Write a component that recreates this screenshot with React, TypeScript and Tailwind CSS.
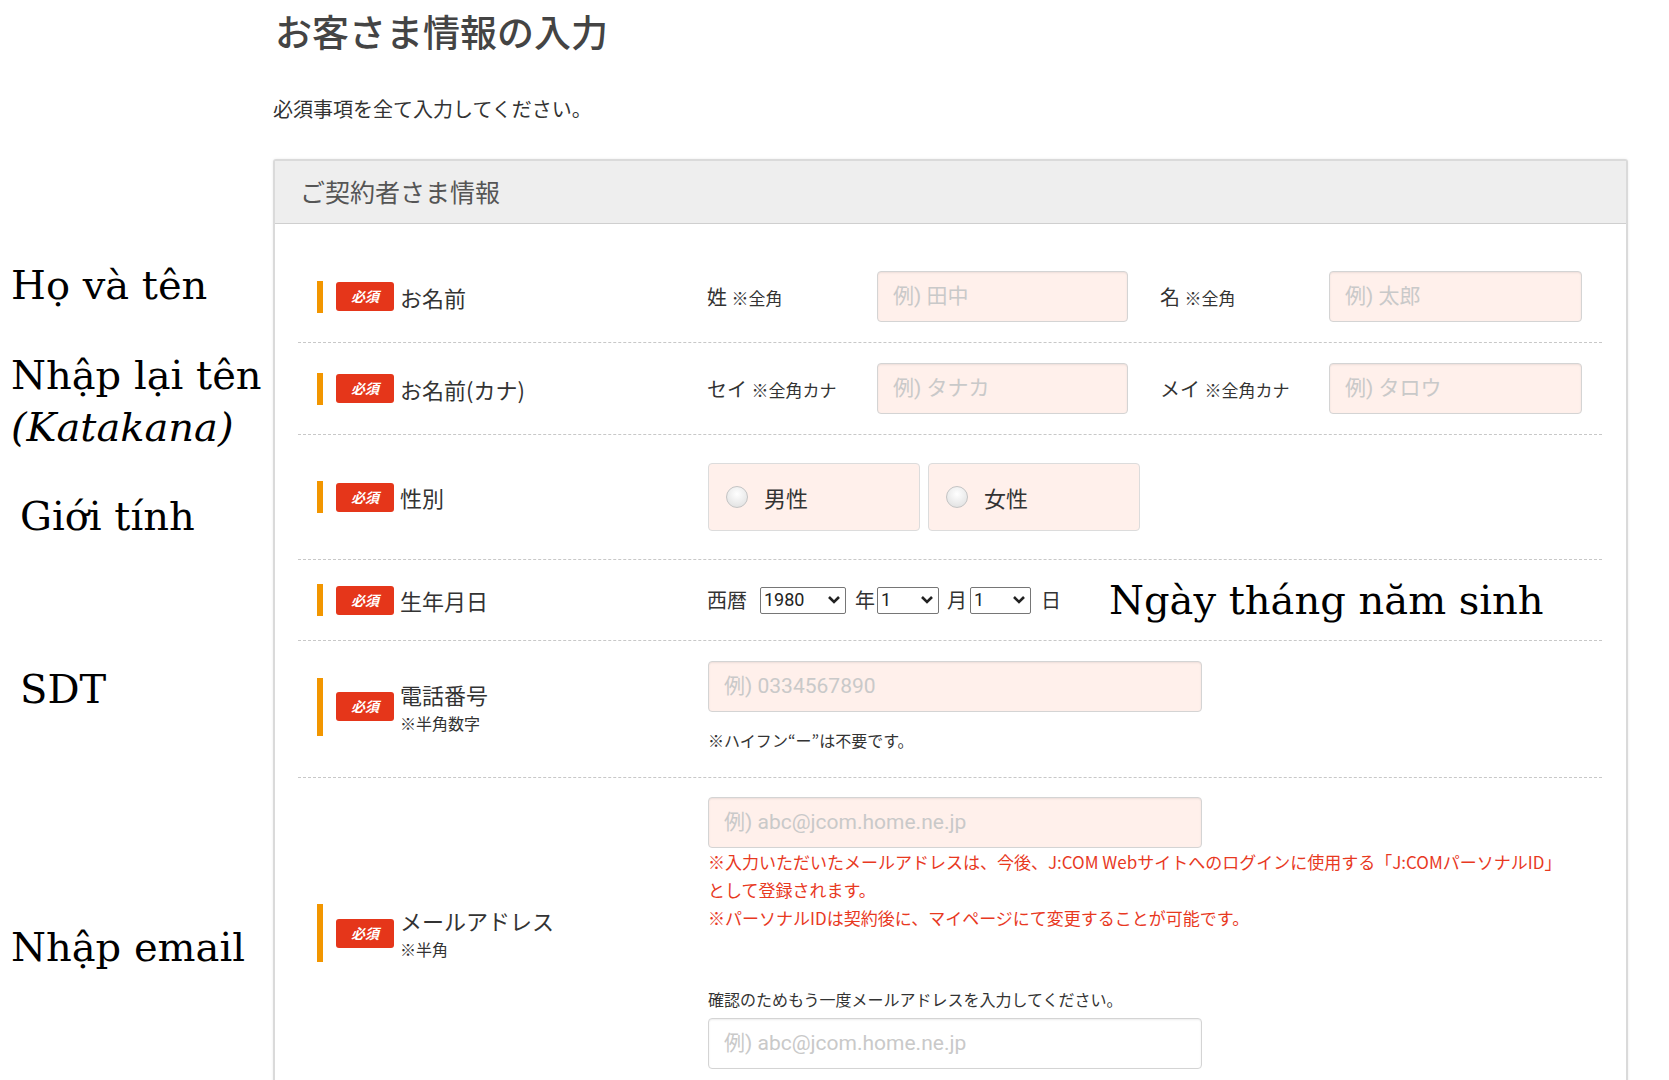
import React from 'react';

const jp = { fontFamily: '"Noto Sans CJK JP", "Noto Sans", sans-serif' };
const serif = { fontFamily: '"DejaVu Serif", "Liberation Serif", serif' };
const latin = { fontFamily: 'Roboto, "Noto Sans CJK JP", sans-serif' };

const Badge = () => (
  <span className="flex h-[29px] w-[58px] shrink-0 items-center justify-center self-center rounded-[3px] bg-[#e5361a] text-[14px] font-bold italic text-white">
    必須
  </span>
);

const Label = ({ title, sub }: { title: string; sub?: string }) => (
  <div className="flex w-[409px] shrink-0 items-center">
    <div className="ml-[19px] flex items-stretch">
      <span className="w-[6px] bg-[#f29600]" />
      <span className="ml-[13px] flex">
        <Badge />
      </span>
      <div className="ml-[6px] flex flex-col justify-center">
        <span className="text-[22px] leading-[32px] text-[#333]">{title}</span>
        {sub && <span className="text-[16px] leading-[26px] text-[#333]">{sub}</span>}
      </div>
    </div>
  </div>
);

const Input = ({ ph, w, white }: { ph: string; w: string; white?: boolean }) => (
  <div
    className={`flex h-[51px] shrink-0 items-center rounded-[4px] border border-[#d4d4d4] pl-[15px] shadow-[inset_0_1px_2px_rgba(0,0,0,0.08)] ${w} ${
      white ? 'bg-white' : 'bg-[#fff0eb]'
    }`}
  >
    <span className="text-[21px] text-[#c9c9c9]" style={latin}>
      {ph}
    </span>
  </div>
);

const Sel = ({ v, w }: { v: string; w: string }) => (
  <div className={`flex h-[27px] items-center justify-between rounded-[2px] border border-[#767676] bg-white pl-[3px] pr-[4px] ${w}`}>
    <span className="text-[18px] leading-none text-[#222]" style={latin}>
      {v}
    </span>
    <svg width="14" height="10" viewBox="0 0 14 10">
      <polyline points="2,2 7,7 12,2" fill="none" stroke="#222" strokeWidth="2.6" />
    </svg>
  </div>
);

const Radio = ({ text }: { text: string }) => (
  <div className="flex h-[68px] w-[212px] items-center rounded-[4px] border border-[#dcdcdc] bg-[#fff0eb] pl-[17px]">
    <span className="h-[22px] w-[22px] rounded-full border border-[#c4c4c4] bg-[radial-gradient(circle_at_50%_35%,#ffffff,#dcdcdc)]" />
    <span className="ml-[16px] text-[22px] text-[#333]">{text}</span>
  </div>
);

const Row = ({ children, cls }: { children: React.ReactNode; cls: string }) => (
  <div className={`flex border-b border-dashed border-[#c8c8c8] ${cls}`}>{children}</div>
);

export default function App() {
  return (
    <div className="relative min-h-[1080px] w-full overflow-hidden bg-white" style={jp}>
      {/* annotations */}
      <div className="absolute left-[11px] top-[261px] text-[40px] leading-[48px] text-black" style={serif}>
        Họ và tên
      </div>
      <div className="absolute left-[11px] top-[349px] text-[40px] leading-[52px] text-black" style={serif}>
        Nhập lại tên
        <br />
        <i>(Katakana)</i>
      </div>
      <div className="absolute left-[20px] top-[492px] text-[40px] leading-[48px] text-black" style={serif}>
        Giới tính
      </div>
      <div className="absolute left-[20px] top-[665px] text-[40px] leading-[48px] text-black" style={serif}>
        SDT
      </div>
      <div className="absolute left-[11px] top-[923px] text-[40px] leading-[48px] text-black" style={serif}>
        Nhập email
      </div>

      <div className="ml-[273px] w-[1355px]">
        <h1 className="pl-[2px] pt-[11px] text-[37px] font-medium leading-[40px] text-[#444]">お客さま情報の入力</h1>
        <p className="mt-[44px] text-[20px] leading-[28px] text-[#333]">必須事項を全て入力してください。</p>

        <div className="mt-[36px] rounded-t-[3px] border-2 border-[#dadada] shadow-[0_0_3px_rgba(0,0,0,0.08)]">
          <div className="flex h-[63px] items-center border-b border-[#cfcfcf] bg-[#eeeeee] pl-[25px]">
            <span className="text-[25px] text-[#555]">ご契約者さま情報</span>
          </div>

          <div className="pl-[23px] pr-[24px] pt-[27px]">
            {/* name */}
            <Row cls="py-[20px]">
              <Label title="お名前" />
              <div className="flex items-center">
                <span className="w-[170px] text-[20px] text-[#333]">
                  姓 <span className="text-[17px]">※全角</span>
                </span>
                <Input ph="例) 田中" w="w-[251px]" />
                <span className="ml-[32px] w-[169px] text-[20px] text-[#333]">
                  名 <span className="text-[17px]">※全角</span>
                </span>
                <Input ph="例) 太郎" w="w-[253px]" />
              </div>
            </Row>

            {/* kana */}
            <Row cls="py-[20px]">
              <Label title="お名前(カナ)" />
              <div className="flex items-center">
                <span className="w-[170px] text-[20px] text-[#333]">
                  セイ <span className="text-[17px]">※全角カナ</span>
                </span>
                <Input ph="例) タナカ" w="w-[251px]" />
                <span className="ml-[32px] w-[169px] text-[20px] text-[#333]">
                  メイ <span className="text-[17px]">※全角カナ</span>
                </span>
                <Input ph="例) タロウ" w="w-[253px]" />
              </div>
            </Row>

            {/* gender */}
            <Row cls="py-[28px]">
              <Label title="性別" />
              <div className="ml-[1px] flex gap-[8px]">
                <Radio text="男性" />
                <Radio text="女性" />
              </div>
            </Row>

            {/* birthday */}
            <Row cls="py-[20px]">
              <Label title="生年月日" />
              <div className="flex h-[40px] items-center text-[20px] text-[#333]">
                <span className="mr-[13px]">西暦</span>
                <Sel v="1980" w="w-[86px]" />
                <span className="ml-[9px]">年</span>
                <span className="ml-[2px]">
                  <Sel v="1" w="w-[62px]" />
                </span>
                <span className="ml-[8px]">月</span>
                <span className="ml-[3px]">
                  <Sel v="1" w="w-[61px]" />
                </span>
                <span className="ml-[10px]">日</span>
                <span className="ml-[48px] text-[40px] leading-[48px] text-black" style={serif}>
                  Ngày tháng năm sinh
                </span>
              </div>
            </Row>

            {/* phone */}
            <Row cls="pt-[20px] pb-[25px]">
              <Label title="電話番号" sub="※半角数字" />
              <div className="ml-[1px] flex flex-col">
                <Input ph="例) 0334567890" w="w-[494px]" />
                <span className="mt-[16px] text-[16px] leading-[24px] text-[#333]">※ハイフン“ー”は不要です。</span>
              </div>
            </Row>

            {/* email */}
            <Row cls="pt-[19px] pb-[20px]">
              <Label title="メールアドレス" sub="※半角" />
              <div className="ml-[1px] flex flex-col">
                <Input ph="例) abc@jcom.home.ne.jp" w="w-[494px]" />
                <p className="whitespace-nowrap text-[17px] leading-[28px] text-[#e8391f]">
                  ※入力いただいたメールアドレスは、今後、J:COM Webサイトへのログインに使用する「J:COMパーソナルID」
                  <br />
                  として登録されます。
                  <br />
                  ※パーソナルIDは契約後に、マイページにて変更することが可能です。
                </p>
                <span className="mt-[55px] text-[16px] leading-[24px] text-[#333]">確認のためもう一度メールアドレスを入力してください。</span>
                <div className="mt-[7px]">
                  <Input ph="例) abc@jcom.home.ne.jp" w="w-[494px]" white />
                </div>
              </div>
            </Row>
          </div>
        </div>
      </div>
    </div>
  );
}
